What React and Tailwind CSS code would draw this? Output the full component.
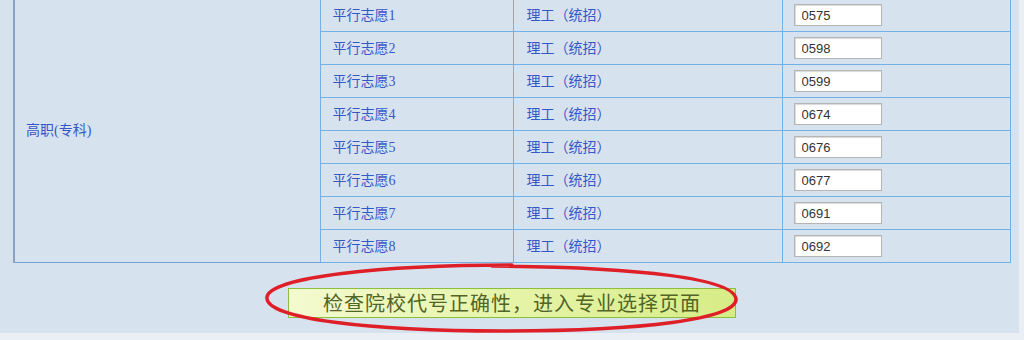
import React from "react";

const rows = [
  { name: "平行志愿1", code: "0575" },
  { name: "平行志愿2", code: "0598" },
  { name: "平行志愿3", code: "0599" },
  { name: "平行志愿4", code: "0674" },
  { name: "平行志愿5", code: "0676" },
  { name: "平行志愿6", code: "0677" },
  { name: "平行志愿7", code: "0691" },
  { name: "平行志愿8", code: "0692" },
];

const cellFont = { fontFamily: '"Liberation Serif", "Noto Sans CJK SC", serif' };

const App = () => {
  return (
    <div className="w-[1024px] h-[340px] bg-[#e9eff5] overflow-hidden">
      <div className="relative w-[1019px] h-[335px] bg-[#d6e3ef] pl-[13px]">
        <table className="-mt-[2px] w-[996px] border-collapse table-fixed border border-[#6fa3d8]">
          <colgroup>
            <col className="w-[306px]" />
            <col className="w-[193px]" />
            <col className="w-[269px]" />
            <col className="w-[228px]" />
          </colgroup>
          <tbody>
            {rows.map((row, i) => (
              <tr key={row.name} className="h-[33px]">
                {i === 0 && (
                  <td
                    rowSpan={8}
                    className="border-l-2 border-l-[#8aa3c0] border-r border-r-[#74b0e8] border-b border-b-[#6fa3d8] pl-[11px] text-[14px] text-[#3557c8] align-middle"
                    style={cellFont}
                  >
                    高职(专科)
                  </td>
                )}
                <td
                  className="border border-[#74b0e8] pl-[12px] text-[14px] text-[#3557c8]"
                  style={cellFont}
                >
                  {row.name}
                </td>
                <td
                  className="border border-[#74b0e8] pl-[13px] text-[14px] text-[#3557c8]"
                  style={cellFont}
                >
                  理工（统招）
                </td>
                <td className="border border-[#74b0e8] pl-[11px]">
                  <input
                    readOnly
                    value={row.code}
                    className="block w-[88px] h-[22px] bg-white border border-[#b5b5b5] shadow-[inset_1px_1px_1px_rgba(0,0,0,0.15)] pl-[7px] text-[13px] text-[#333]"
                    style={{ fontFamily: '"Liberation Sans", Arial, sans-serif' }}
                  />
                </td>
              </tr>
            ))}
          </tbody>
        </table>

        <div className="flex justify-center mt-[25px] pr-[8px]">
          <button
            className="w-[448px] h-[30px] border border-[#8cbf3c] bg-gradient-to-r from-[#f3fad0] via-[#e6f4a8] to-[#d7ec86] text-[20px] tracking-[1px] text-[#526426] leading-none"
            style={{ fontFamily: '"Noto Sans CJK SC", sans-serif', fontWeight: 400 }}
          >
            检查院校代号正确性，进入专业选择页面
          </button>
        </div>

        <svg
          className="absolute left-[262px] top-[263px] pointer-events-none"
          width="480"
          height="74"
          viewBox="0 0 480 74"
        >
          <path
            d="M250 4 C 120 4, 8 16, 5 36 C 2 58, 110 70, 240 70 C 380 70, 476 58, 474 38 C 472 18, 380 6, 230 5"
            fill="none"
            stroke="#df1f28"
            strokeWidth="3.5"
            strokeLinecap="round"
          />
        </svg>
      </div>
    </div>
  );
};

export default App;
